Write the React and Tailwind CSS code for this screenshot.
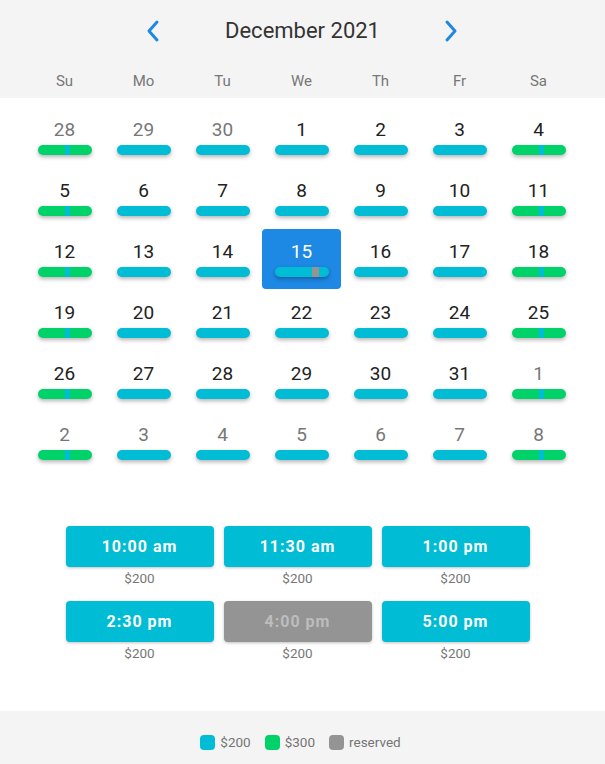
import React from "react";

const CYAN = "bg-[#00bcd4]";

function Bar({ type, selected }) {
  if (type === "green") {
    return (
      <div className="relative h-[10px] w-[54px] rounded-[5px] bg-[#00d26a] shadow-[0_2px_4px_rgba(0,0,0,0.3)] overflow-hidden">
        <div className="absolute left-[27px] top-0 h-full w-[5px] bg-[#00bcd4]" />
      </div>
    );
  }
  return (
    <div className="relative h-[10px] w-[54px] rounded-[5px] bg-[#00bcd4] shadow-[0_2px_4px_rgba(0,0,0,0.3)] overflow-hidden">
      {selected && <div className="absolute left-[37px] top-0 h-full w-[7px] bg-[#949494]" />}
    </div>
  );
}

function ChevronLeft() {
  return (
    <svg width="16" height="24" viewBox="0 0 16 24" fill="none">
      <path d="M12 3 L4 12 L12 21" stroke="#1e88e5" strokeWidth="3" strokeLinecap="round" strokeLinejoin="round" />
    </svg>
  );
}
function ChevronRight() {
  return (
    <svg width="16" height="24" viewBox="0 0 16 24" fill="none">
      <path d="M4 3 L12 12 L4 21" stroke="#1e88e5" strokeWidth="3" strokeLinecap="round" strokeLinejoin="round" />
    </svg>
  );
}

export default function App() {
  const days = [];
  [28, 29, 30].forEach((d) => days.push({ d, other: true }));
  for (let i = 1; i <= 31; i++) days.push({ d: i, other: false });
  for (let i = 1; i <= 8; i++) days.push({ d: i, other: true });

  const slots = [
    { t: "10:00 am" },
    { t: "11:30 am" },
    { t: "1:00 pm" },
    { t: "2:30 pm" },
    { t: "4:00 pm", reserved: true },
    { t: "5:00 pm" },
  ];

  return (
    <div className="w-[605px] h-[764px] bg-white flex flex-col font-['Roboto',sans-serif]">
      <div className="bg-[#f4f4f4] h-[98px] flex flex-col">
        <div className="flex items-center justify-center h-[60px] pt-[1px] pr-[2px]">
          <div className="w-[16px] mr-[62px]"><ChevronLeft /></div>
          <div className="text-[22px] text-[#333] w-[160px] text-center">December 2021</div>
          <div className="w-[16px] ml-[60px]"><ChevronRight /></div>
        </div>
        <div className="grid grid-cols-7 pl-[25px] pr-[27px] text-[15px] text-[#777] text-center mt-[10px]">
          {["Su", "Mo", "Tu", "We", "Th", "Fr", "Sa"].map((n) => (
            <div key={n}>{n}</div>
          ))}
        </div>
      </div>

      <div className="grid grid-cols-7 pl-[25px] pr-[27px] pt-[9px] auto-rows-[61px]">
        {days.map((x, i) => {
          const col = i % 7;
          const weekend = col === 0 || col === 6;
          const selected = !x.other && x.d === 15;
          return (
            <div
              key={i}
              className={`h-[60px] flex flex-col items-center pt-[11px] rounded-[4px] ${selected ? "bg-[#1e88e5]" : ""}`}
            >
              <div
                className={`text-[19px] leading-[24px] ${selected ? "text-white" : x.other ? "text-[#777]" : "text-[#222]"}`}
              >
                {x.d}
              </div>
              <div className="mt-[3px]">
                <Bar type={weekend ? "green" : "cyan"} selected={selected} />
              </div>
            </div>
          );
        })}
      </div>

      <div className="flex-1 flex flex-col items-center pt-[53px]">
        <div className="grid grid-cols-3 gap-x-[10px] gap-y-[14px] pr-[10px]">
          {slots.map((s) => (
            <div key={s.t} className="flex flex-col items-center">
              <div
                className={`w-[148px] h-[41px] rounded-[4px] flex items-center justify-center text-[16px] font-bold tracking-[1px] shadow-[0_1px_3px_rgba(0,0,0,0.25)] ${s.reserved ? "bg-[#949494] text-[#bdbdbd]" : `${CYAN} text-white`}`}
              >
                {s.t}
              </div>
              <div className="text-[13.5px] text-[#777] leading-[17px] mt-[3px]">$200</div>
            </div>
          ))}
        </div>
      </div>

      <div className="bg-[#f4f4f4] h-[53px] flex items-center justify-center pt-[10px] pr-[4px] text-[13.5px] text-[#757575]">
        <div className="flex items-center">
          <div className="w-[15px] h-[15px] rounded-[4px] bg-[#00bcd4] mr-[5px]" />
          <span>$200</span>
          <div className="w-[15px] h-[15px] rounded-[4px] bg-[#00d26a] ml-[14px] mr-[5px]" />
          <span>$300</span>
          <div className="w-[15px] h-[15px] rounded-[4px] bg-[#949494] ml-[14px] mr-[5px]" />
          <span>reserved</span>
        </div>
      </div>
    </div>
  );
}
